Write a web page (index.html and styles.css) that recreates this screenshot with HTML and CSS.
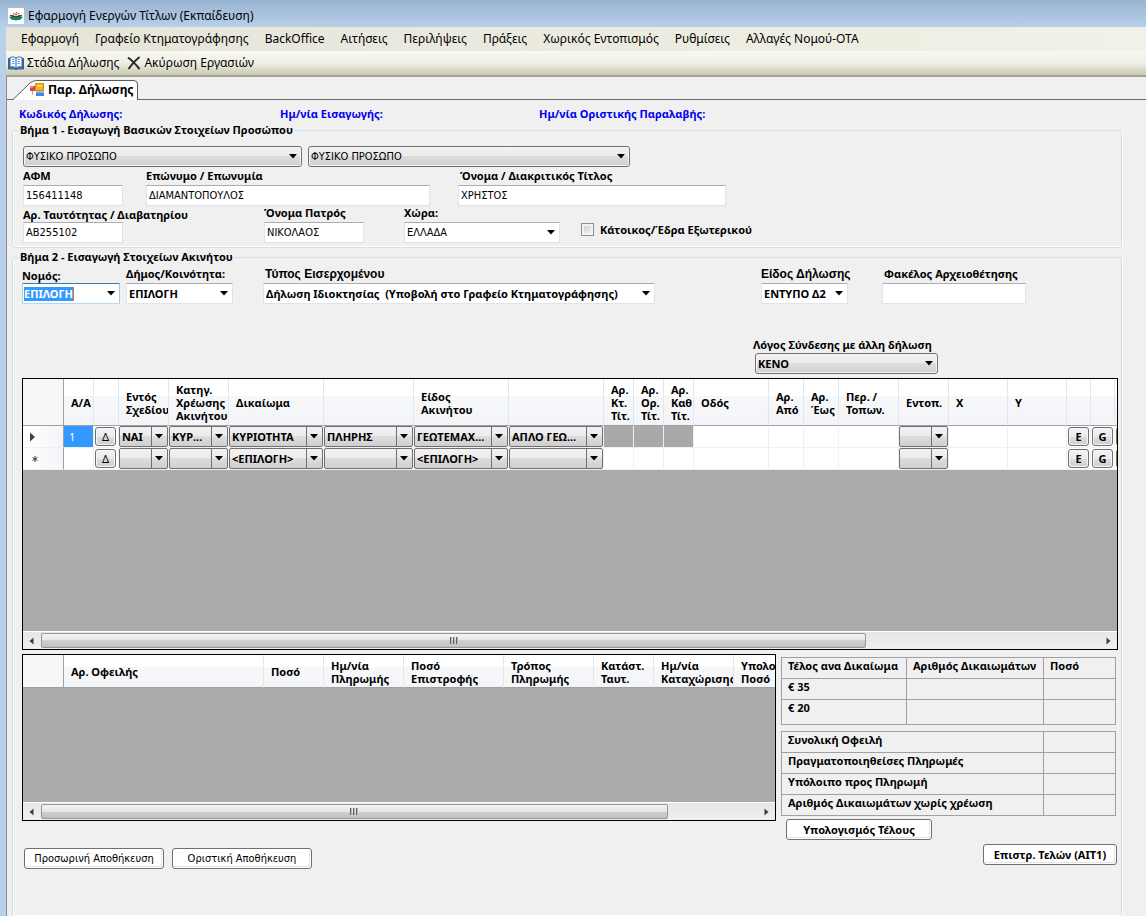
FILE: index.html
```html
<!DOCTYPE html>
<html lang="el">
<head>
<meta charset="utf-8">
<title>Εφαρμογή Ενεργών Τίτλων (Εκπαίδευση)</title>
<link rel="stylesheet" href="styles.css">
</head>
<body>
<div class="window">
  <header class="titlebar">
    <svg class="app-icon" width="16" height="16" viewBox="0 0 16 16" aria-hidden="true">
      <rect width="16" height="16" fill="#fff"/>
      <path d="M1 9 L4 8 L8 10 L12 8 L15 9 L12 12 L9 12 L8 13 L7 12 L4 12 Z" fill="#0c8468"/>
      <path d="M1 7.500 Q5 6 8 8.500 Q11 6 15 7.500 Q11 8 8 10 Q5 8 1 7.500 Z" fill="#33271e"/>
      <path d="M4 6.500 L8 4 L12 6.500 L8 8 Z" fill="#f0cdb8"/>
      <path d="M5 5h1v1h-1z M8 4h1v1h-1z M10 5h1v1h-1z M7 6h2v1h-2z" fill="#b0563c"/>
    </svg>
    <h1 class="title">Εφαρμογή Ενεργών Τίτλων (Εκπαίδευση)</h1>
  </header>

  <div class="client">
    <nav class="menubar">
      <button class="menu-item">Εφαρμογή</button>
      <button class="menu-item">Γραφείο Κτηματογράφησης</button>
      <button class="menu-item">BackOffice</button>
      <button class="menu-item">Αιτήσεις</button>
      <button class="menu-item">Περιλήψεις</button>
      <button class="menu-item">Πράξεις</button>
      <button class="menu-item">Χωρικός Εντοπισμός</button>
      <button class="menu-item">Ρυθμίσεις</button>
      <button class="menu-item">Αλλαγές Νομού-ΟΤΑ</button>
    </nav>
    <div class="toolbar">
      <button class="tool">
        <svg width="16" height="16" viewBox="0 0 16 16" aria-hidden="true">
          <path d="M0.500 3.500 H2 V12 H14 V3.500 H15.500 V14 H9 L8 15 L7 14 H0.500 Z" fill="#4f86c6" stroke="#2c5a96"/>
          <path d="M2 2.500 Q5.500 1 8 3 Q10.500 1 14 2.500 V12 Q10.500 11 8 13 Q5.500 11 2 12 Z" fill="#f4f9ff" stroke="#3a69a5"/>
          <path d="M8 3 V13" stroke="#3a69a5"/>
          <path d="M4 4.500h2.500 M4 6.500h2.500 M4 8.500h2.500 M9.500 4.500h2.500 M9.500 6.500h2.500 M9.500 8.500h2.500" stroke="#6fa0d8"/>
        </svg>
        Στάδια Δήλωσης
      </button>
      <button class="tool">
        <svg width="14" height="14" viewBox="0 0 14 14" aria-hidden="true">
          <path d="M1 1.500 Q6 5 12.500 13 M12.500 1 Q6 6 1.500 13" fill="none" stroke="#2b2b2b" stroke-width="2"/>
        </svg>
        Ακύρωση Εργασιών
      </button>
    </div>

    <main class="workspace">
      <div class="tabs">
        <button class="tab">
          <svg class="tab-shape" width="125" height="20" viewBox="0 0 125 20" aria-hidden="true">
            <path d="M0 20 L17 3 Q20 0.500 24 0.500 H121 Q124.500 1 124.500 4 V20 Z" fill="#fff"/>
            <path d="M0 19.500 L17 3 Q20 0.500 24 0.500 H121 Q124.500 1 124.500 4 V20" fill="none" stroke="#5a5a5a"/>
          </svg>
          <svg class="tab-icon" width="16" height="16" viewBox="0 0 16 16" aria-hidden="true">
            <path d="M3.500 9v4" stroke="#c9a0a0"/>
            <rect x="1" y="4" width="5" height="5" fill="#e0453c"/>
            <rect x="1" y="4" width="3" height="2" fill="#f0857c"/>
            <rect x="6.500" y="1.500" width="8" height="7" fill="#f7b21c" stroke="#d8920c"/>
            <rect x="8" y="3" width="5" height="2" fill="#ffd562"/>
            <rect x="7" y="9" width="8" height="5" fill="#4a83e0"/>
            <rect x="7" y="9" width="8" height="2" fill="#8eb6f5"/>
          </svg>
          <span class="tab-text">Παρ. Δήλωσης</span>
        </button>
      </div>

      <form class="form">
        <div class="summary">
          <span>Κωδικός Δήλωσης:</span>
          <span>Ημ/νία Εισαγωγής:</span>
          <span>Ημ/νία Οριστικής Παραλαβής:</span>
        </div>

        <fieldset class="group">
          <legend>Βήμα 1 - Εισαγωγή Βασικών Στοιχείων Προσώπου</legend>
          <div class="row-kind">
            <select class="combo raised" aria-label="Είδος προσώπου"><option>ΦΥΣΙΚΟ ΠΡΟΣΩΠΟ</option></select>
            <select class="combo raised" aria-label="Κατηγορία προσώπου"><option>ΦΥΣΙΚΟ ΠΡΟΣΩΠΟ</option></select>
          </div>
          <div class="row-name">
            <div class="field"><label for="afm">ΑΦΜ</label><input id="afm" class="box w-s" value="156411148"></div>
            <div class="field"><label for="surname">Επώνυμο / Επωνυμία</label><input id="surname" class="box w-xl" value="ΔΙΑΜΑΝΤΟΠΟΥΛΟΣ"></div>
            <div class="field"><label for="name" class="inset">Όνομα / Διακριτικός Τίτλος</label><input id="name" class="box w-l" value="ΧΡΗΣΤΟΣ"></div>
          </div>
          <div class="row-ident">
            <div class="field close"><label for="ident">Αρ. Ταυτότητας / Διαβατηρίου</label><input id="ident" class="box w-s" value="ΑΒ255102"></div>
            <div class="field"><label for="father">Όνομα Πατρός</label><input id="father" class="box w-s" value="ΝΙΚΟΛΑΟΣ"></div>
            <div class="field"><label for="country">Χώρα:</label><select id="country" class="combo w-m"><option>ΕΛΛΑΔΑ</option></select></div>
            <div class="check"><input type="checkbox" id="abroad"><label for="abroad">Κάτοικος/Έδρα Εξωτερικού</label></div>
          </div>
        </fieldset>

        <fieldset class="group step2">
          <legend>Βήμα 2 - Εισαγωγή Στοιχείων Ακινήτου</legend>
          <div class="row-estate">
            <div class="field close"><label for="nomos">Νομός:</label>
              <div class="combo focused w-f"><button type="button" id="nomos" class="picker"><span class="picked">ΕΠΙΛΟΓΗ</span></button></div></div>
            <div class="field"><label for="dimos">Δήμος/Κοινότητα:</label><select id="dimos" class="combo strong w-n"><option>ΕΠΙΛΟΓΗ</option></select></div>
            <div class="field"><label for="kind" class="alt inset">Τύπος Εισερχομένου</label><select id="kind" class="combo strong w-xxl"><option>Δήλωση Ιδιοκτησίας&nbsp; (Υποβολή στο Γραφείο Κτηματογράφησης)</option></select></div>
            <div class="field"><label for="dtype" class="alt">Είδος Δήλωσης</label><select id="dtype" class="combo strong w-xs"><option>ΕΝΤΥΠΟ Δ2</option></select></div>
            <div class="field"><label for="folder" class="inset">Φακέλος Αρχειοθέτησης</label><input id="folder" class="box w-m2"></div>
          </div>
          <div class="row-link">
            <div class="field close"><label for="reason">Λόγος Σύνδεσης με άλλη δήλωση</label><select id="reason" class="combo raised strong"><option>ΚΕΝΟ</option></select></div>
          </div>

          <div class="datagrid main-grid">
            <div class="viewport">
              <table class="grid">
                <colgroup>
                  <col class="c41"><col class="c30"><col class="c25"><col class="c50"><col class="c60"><col class="c95"><col class="c90"><col class="c95"><col class="c95"><col class="c30"><col class="c30"><col class="c30"><col class="c75"><col class="c35"><col class="c35"><col class="c60"><col class="c50"><col class="c59"><col class="c59"><col class="c24"><col class="c24"><col class="c24">
                </colgroup>
                <thead>
                  <tr><th class="corner"></th><th>Α/Α</th><th></th><th>Εντός<br>Σχεδίου</th><th>Κατηγ.<br>Χρέωσης<br>Ακινήτου</th><th>Δικαίωμα</th><th></th><th>Είδος<br>Ακινήτου</th><th></th><th>Αρ.<br>Κτ.<br>Τίτ.</th><th>Αρ.<br>Ορ.<br>Τίτ.</th><th>Αρ.<br>Καθ<br>Τίτ.</th><th>Οδός</th><th>Αρ.<br>Από</th><th>Αρ.<br>Έως</th><th>Περ. /<br>Τοπων.</th><th>Εντοπ.</th><th>Χ</th><th>Υ</th><th></th><th></th><th></th></tr>
                </thead>
                <tbody>
                  <tr>
                    <td class="rowhead"><svg width="6" height="10" viewBox="0 0 6 10" aria-hidden="true"><path d="M0 0.500 L5 5 L0 9.500 Z" fill="#404040"/></svg></td>
                    <td class="current">1</td>
                    <td><button type="button" class="cell-btn thin">Δ</button></td>
                    <td><select class="cell" aria-label="Εντός Σχεδίου"><option>ΝΑΙ</option></select></td>
                    <td><select class="cell" aria-label="Κατηγ. Χρέωσης"><option>ΚΥΡ...</option></select></td>
                    <td><select class="cell" aria-label="Δικαίωμα"><option>ΚΥΡΙΟΤΗΤΑ</option></select></td>
                    <td><select class="cell" aria-label="Τύπος δικαιώματος"><option>ΠΛΗΡΗΣ</option></select></td>
                    <td><select class="cell" aria-label="Είδος Ακινήτου"><option>ΓΕΩΤΕΜΑΧ...</option></select></td>
                    <td><select class="cell" aria-label="Περιγραφή ακινήτου"><option>ΑΠΛΟ ΓΕΩ...</option></select></td>
                    <td class="off"></td><td class="off"></td><td class="off"></td>
                    <td></td><td></td><td></td><td></td>
                    <td><select class="cell" aria-label="Εντοπισμός"><option></option></select></td>
                    <td></td><td></td>
                    <td><button type="button" class="cell-btn">E</button></td>
                    <td><button type="button" class="cell-btn">G</button></td>
                    <td><button type="button" class="cell-btn" aria-label="Περισσότερα"></button></td>
                  </tr>
                  <tr>
                    <td class="rowhead"><svg class="star" width="6" height="6" viewBox="0 0 6 6" aria-hidden="true"><path d="M3 0v6 M0.500 1.500l5 3 M5.500 1.500l-5 3" stroke="#404040"/></svg></td>
                    <td></td>
                    <td><button type="button" class="cell-btn thin">Δ</button></td>
                    <td><select class="cell" aria-label="Εντός Σχεδίου"><option></option></select></td>
                    <td><select class="cell" aria-label="Κατηγ. Χρέωσης"><option></option></select></td>
                    <td><select class="cell" aria-label="Δικαίωμα"><option>&lt;ΕΠΙΛΟΓΗ&gt;</option></select></td>
                    <td><select class="cell" aria-label="Τύπος δικαιώματος"><option></option></select></td>
                    <td><select class="cell" aria-label="Είδος Ακινήτου"><option>&lt;ΕΠΙΛΟΓΗ&gt;</option></select></td>
                    <td><select class="cell" aria-label="Περιγραφή ακινήτου"><option></option></select></td>
                    <td></td><td></td><td></td><td></td><td></td><td></td><td></td>
                    <td><select class="cell" aria-label="Εντοπισμός"><option></option></select></td>
                    <td></td><td></td>
                    <td><button type="button" class="cell-btn">E</button></td>
                    <td><button type="button" class="cell-btn">G</button></td>
                    <td><button type="button" class="cell-btn" aria-label="Περισσότερα"></button></td>
                  </tr>
                </tbody>
              </table>
            </div>
            <div class="scrollbar">
              <svg class="arrow" width="5" height="8" viewBox="0 0 5 8" aria-hidden="true"><path d="M4.500 0.500 L0.500 4 L4.500 7.500 Z" fill="#404040"/></svg>
              <div class="track"><div class="thumb" style="width:78%"><i class="grip"></i></div></div>
              <svg class="arrow" width="5" height="8" viewBox="0 0 5 8" aria-hidden="true"><path d="M0.500 0.500 L4.500 4 L0.500 7.500 Z" fill="#404040"/></svg>
            </div>
          </div>

          <div class="lower">
            <div class="datagrid debts">
              <div class="viewport">
                <table class="grid short">
                  <colgroup><col class="c41"><col class="c200"><col class="c60"><col class="c80"><col class="c100"><col class="c90"><col class="c60"><col class="c80"><col class="c80"></colgroup>
                  <thead>
                    <tr><th class="corner"></th><th>Αρ. Οφειλής</th><th>Ποσό</th><th>Ημ/νία<br>Πληρωμής</th><th>Ποσό<br>Επιστροφής</th><th>Τρόπος<br>Πληρωμής</th><th>Κατάστ.<br>Ταυτ.</th><th>Ημ/νία<br>Καταχώρισης</th><th>Υπολο<br>Ποσό</th></tr>
                  </thead>
                </table>
              </div>
              <div class="scrollbar">
                <svg class="arrow" width="5" height="8" viewBox="0 0 5 8" aria-hidden="true"><path d="M4.500 0.500 L0.500 4 L4.500 7.500 Z" fill="#404040"/></svg>
                <div class="track"><div class="thumb" style="width:87.500%"><i class="grip"></i></div></div>
                <svg class="arrow" width="5" height="8" viewBox="0 0 5 8" aria-hidden="true"><path d="M0.500 0.500 L4.500 4 L0.500 7.500 Z" fill="#404040"/></svg>
              </div>
            </div>
            <div class="fees">
              <table class="fee-table rates">
                <colgroup><col class="c125"><col><col class="c72"></colgroup>
                <tr><th>Τέλος ανα Δικαίωμα</th><th>Αριθμός Δικαιωμάτων</th><th>Ποσό</th></tr>
                <tr><th>€ 35</th><td></td><td></td></tr>
                <tr><th>€ 20</th><td></td><td></td></tr>
              </table>
              <table class="fee-table">
                <colgroup><col><col class="c72"></colgroup>
                <tr><th>Συνολική Οφειλή</th><td></td></tr>
                <tr><th>Πραγματοποιηθείσες Πληρωμές</th><td></td></tr>
                <tr><th>Υπόλοιπο προς Πληρωμή</th><td></td></tr>
                <tr><th>Αριθμός Δικαιωμάτων χωρίς χρέωση</th><td></td></tr>
              </table>
              <button type="button" class="btn calc">Υπολογισμός Τέλους</button>
            </div>
          </div>

          <div class="actions">
            <button type="button" class="btn save">Προσωρινή Αποθήκευση</button>
            <button type="button" class="btn save">Οριστική Αποθήκευση</button>
            <button type="button" class="btn refund">Επιστρ. Τελών (ΑΙΤ1)</button>
          </div>
        </fieldset>
      </form>
    </main>
  </div>
</div>
</body>
</html>
```
FILE: styles.css
```css
:root {
  --ui: "Noto Sans", "Open Sans", sans-serif;
  --value: "DejaVu Sans Condensed", "DejaVu Sans", sans-serif;
  --alt: "Liberation Sans", Arial, sans-serif;
  --face: #f0f0f0;
  --arrow: url("data:image/svg+xml,%3Csvg xmlns='http://www.w3.org/2000/svg' width='8' height='5'%3E%3Cpath d='M0 0H8L4 4.500Z'/%3E%3C/svg%3E");
  --button-face: linear-gradient(#f2f2f2, #ebebeb 50%, #dddddd 50%, #cfcfcf);
}

* { box-sizing: border-box; }

body {
  margin: 0;
  background: var(--face);
  color: #000;
  font: 11px/14px var(--ui);
}

button, input, select {
  margin: 0;
  color: inherit;
  font: inherit;
}

.window {
  display: flex;
  flex-direction: column;
  min-height: 100vh;
  background: #bad1ea;
}

.titlebar {
  display: flex;
  align-items: center;
  gap: 4px;
  height: 27px;
  padding: 4px 8px 0;
  background: linear-gradient(#99b4d1, #b7d0ea);
}

.title {
  margin: 0;
  font: 12px/16px var(--ui);
}

.client {
  display: flex;
  flex: 1;
  flex-direction: column;
  margin-left: 6px;
}

.menubar {
  display: flex;
  gap: 16px;
  height: 24px;
  padding-left: 15px;
  background: linear-gradient(90deg, #e5e4d7, #f2f1e7);
}

.menu-item, .tool {
  padding: 0;
  border: 0;
  background: none;
  font: 12px/16px var(--ui);
  white-space: nowrap;
}

.toolbar {
  display: flex;
  gap: 8px;
  height: 26px;
  padding: 0 2px;
  border-bottom: 2px solid #a3a190;
  background: linear-gradient(#f9f9f3, #efeee2 50%, #c9c8b2);
}

.tool {
  display: flex;
  align-items: center;
  gap: 3px;
}

.workspace {
  display: flex;
  flex: 1;
  flex-direction: column;
  border-left: 1px solid #8c8c8c;
  background: var(--face);
}

.tabs {
  height: 23px;
  padding: 3px 6px 0;
  border-bottom: 1px solid #696969;
}

.tab {
  position: relative;
  display: flex;
  align-items: center;
  gap: 3px;
  width: 125px;
  height: 20px;
  padding: 0 0 0 16px;
  border: 0;
  background: none;
  font-size: 12px;
  font-weight: 700;
  white-space: nowrap;
}

.tab-shape {
  position: absolute;
  top: 0;
  left: 0;
}

.tab-icon, .tab-text { position: relative; }

.form {
  display: flex;
  flex: 1;
  flex-direction: column;
  padding: 7px 24px 0 5px;
}

.summary {
  display: grid;
  grid-template-columns: 261px 259px 1fr;
  padding: 0 7px 2px;
  color: #0000f0;
  font-weight: 700;
}

.group {
  min-width: 0;
  margin: 0 0 2px;
  padding: 9px 3px 4px 9px;
  border: 1px solid #d5dfe5;
  border-radius: 3px;
  box-shadow: inset 1px 0 #fff, inset 0 -1px #fff, 1px 0 #fff;
}

.group legend {
  padding: 0 2px;
  margin-left: -4px;
  font-weight: 700;
}

.step2 {
  flex: 1;
  margin: 0;
  padding-top: 3px;
  border-bottom: 0;
  border-radius: 3px 3px 0 0;
}

.row-kind {
  display: grid;
  grid-template-columns: 279px 322px;
  gap: 6px;
  padding: 0 0 2px 1px;
}

.row-name, .row-ident, .row-estate {
  display: grid;
  align-items: end;
}

.row-name { grid-template-columns: 123px 312px 1fr; padding-left: 1px; }
.row-ident { grid-template-columns: 241px 140px 177px 1fr; padding-left: 1px; }
.row-estate { grid-template-columns: 104px 137px 498px 121px 1fr; }

.field {
  display: flex;
  flex-direction: column;
  align-items: flex-start;
  gap: 2px;
  white-space: nowrap;
}

.field.close { gap: 0; }
.field label, .check label { font-weight: 700; }
.field .alt { font: 700 12px/14px var(--alt); }
.field .inset { padding-left: 2px; }

.box, .combo {
  height: 21px;
  padding: 0 2px;
  border: 1px solid #e2e3ea;
  border-top-color: #abadb3;
  border-radius: 1px;
  outline: 0;
  background-color: #fff;
  font-family: var(--value);
}

.combo {
  appearance: none;
  padding-right: 18px;
  background-image: var(--arrow);
  background-repeat: no-repeat;
  background-position: right 4px center;
}

.combo.raised {
  border: 1px solid #707070;
  border-radius: 3px;
  background-image: var(--arrow), var(--button-face);
  background-position: right 4px center, 0 0;
  box-shadow: inset 0 0 0 1px #f6f6f6;
}

.combo.strong {
  font-family: var(--ui);
  font-weight: 700;
}

.combo.focused {
  border-color: #3d7bad #a4c9e3 #b7d9ed #b5cfe7;
  padding: 2px 0 2px 1px;
  font-family: var(--ui);
}

.picker {
  display: block;
  width: 100%;
  height: 15px;
  padding: 0;
  border: 0;
  background: none;
  text-align: left;
  font-weight: 700;
}

.picked {
  display: inline-block;
  border-right: 1px solid #e07818;
  background: #3399ff;
  color: #fff;
}

.w-xs { width: 87px; }
.w-f { width: 98px; }
.w-s { width: 100px; }
.w-n { width: 107px; }
.w-m2 { width: 144px; }
.w-m { width: 156px; }
.w-l { width: 268px; }
.w-xl { width: 284px; }
.w-xxl { width: 392px; }

.check {
  display: flex;
  align-items: center;
  gap: 6px;
  height: 27px;
}

.check input {
  appearance: none;
  width: 13px;
  height: 13px;
  border: 1px solid #8e8f8f;
  background: linear-gradient(135deg, #c8ccd2, #f6f6f6);
  box-shadow: inset 0 0 0 2px #f4f4f4;
}

.row-link {
  display: flex;
  justify-content: flex-end;
  padding: 34px 180px 4px 0;
}

.row-link .field.close { gap: 1px; }
.row-link .combo { width: 183px; margin-left: 2px; }

.datagrid {
  display: flex;
  flex-direction: column;
  min-width: 0;
  border: 1px solid #000;
  background: #ababab;
}

.main-grid { min-height: 272px; }

.viewport {
  flex: 1;
  overflow: hidden;
}

.grid {
  width: 1116px;
  border-collapse: separate;
  border-spacing: 0;
  table-layout: fixed;
}

.grid.short { width: 791px; }

.grid th {
  height: 47px;
  padding: 1px 0 0 7px;
  border-right: 1px solid #e3e6ea;
  border-bottom: 1px solid #a0a0a0;
  background: linear-gradient(#fff 38%, #f6f7f9 38%, #f3f5f8);
  font-size: 11px;
  line-height: 13px;
  text-align: left;
  vertical-align: middle;
  white-space: nowrap;
  overflow: hidden;
}

.grid.short th { height: 33px; }
.grid th.corner { border-right-color: #a0a0a0; background: #f6f7f9; }

.grid td {
  height: 22px;
  padding: 0;
  border-right: 1px solid #f0f0f0;
  border-bottom: 1px solid #f0f0f0;
  background: #fff;
  overflow: hidden;
}

.grid .rowhead {
  padding-left: 7px;
  border-right-color: #a0a0a0;
  background: linear-gradient(90deg, #fff, #f3f5f8);
}

.rowhead svg { display: block; }
.rowhead .star { margin-left: 2px; }

.grid .current {
  padding-left: 5px;
  background: #3399ff;
  color: #fff;
}

.grid .off { background: #a9a9a9; }

.cell {
  appearance: none;
  display: block;
  width: 100%;
  height: 21px;
  padding: 0 16px 0 2px;
  border: 1px solid #707070;
  border-radius: 2px;
  background:
    var(--arrow) right 4px center no-repeat,
    linear-gradient(#707070, #707070) right 15px center / 1px 100% no-repeat,
    var(--button-face);
  font-weight: 700;
}

.cell-btn {
  display: block;
  width: 21px;
  height: 19px;
  margin-left: 1px;
  padding: 0;
  border: 1px solid #707070;
  border-radius: 3px;
  background: var(--button-face);
  box-shadow: inset 0 0 0 1px #f6f6f6;
  font-weight: 700;
}

.cell-btn.thin { font-weight: 400; }

.c24 { width: 24px; }
.c25 { width: 25px; }
.c30 { width: 30px; }
.c35 { width: 35px; }
.c41 { width: 41px; }
.c50 { width: 50px; }
.c59 { width: 59px; }
.c60 { width: 60px; }
.c72 { width: 72px; }
.c75 { width: 75px; }
.c80 { width: 80px; }
.c90 { width: 90px; }
.c95 { width: 95px; }
.c100 { width: 100px; }
.c125 { width: 125px; }
.c200 { width: 200px; }

.scrollbar {
  display: flex;
  align-items: center;
  gap: 7px;
  height: 18px;
  padding: 0 6px;
  border-top: 1px solid #fff;
  background: linear-gradient(#e6e6e6, #f0f0f0);
}

.arrow { flex: none; }
.track { flex: 1; }

.thumb {
  display: flex;
  align-items: center;
  justify-content: center;
  height: 15px;
  border: 1px solid #979797;
  border-radius: 2px;
  background: linear-gradient(#f3f3f3, #e6e6e8 50%, #d0d1d3 50%, #c0c1c4);
}

.grip {
  width: 8px;
  height: 7px;
  background: repeating-linear-gradient(90deg, #606060 0 1px, #b8b8b8 1px 2px, transparent 2px 3px);
}

.lower {
  display: flex;
  gap: 5px;
  padding: 4px 2px 0 0;
}

.debts {
  flex: 1;
  min-height: 167px;
  align-self: flex-start;
}

.fees {
  flex: none;
  width: 335px;
  padding-top: 3px;
}

.fee-table {
  width: 100%;
  margin-bottom: 6px;
  border-collapse: collapse;
  table-layout: fixed;
}

.fee-table + .fee-table { margin-bottom: 3px; }

.fee-table th, .fee-table td {
  height: 21px;
  padding: 1px 6px 0;
  border: 1px solid #a0a0a0;
  text-align: left;
  vertical-align: top;
  white-space: nowrap;
}

.rates tr:last-child th { height: 25px; }

.btn {
  height: 21px;
  padding: 0 6px;
  border: 1px solid #707070;
  border-radius: 3px;
  background: #fff;
  box-shadow: inset 0 0 0 1px #fff, inset -2px -2px #e4e4e4;
  font-weight: 700;
  white-space: nowrap;
}

.calc { width: 146px; margin-left: 5px; }

.actions {
  display: flex;
  gap: 8px;
  padding: 4px 1px 0 2px;
}

.save {
  width: 140px;
  margin-top: 4px;
  font-family: var(--value);
  font-weight: 400;
}

.refund { width: 134px; margin-left: auto; }
```
